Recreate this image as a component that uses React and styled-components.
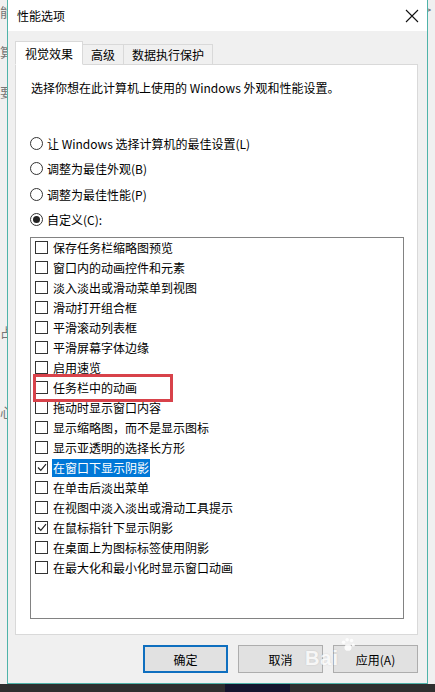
import React from "react";
import styled, { createGlobalStyle } from "styled-components";

const GlobalStyle = createGlobalStyle`
  html, body {
    margin: 0;
    padding: 0;
    background: #2e2e2e;
  }
  body {
    font-family: "Noto Sans CJK SC", "Noto Sans", sans-serif;
    font-size: 12px;
    color: #000;
  }
`;

const Screen = styled.div`
  width: 435px;
  height: 692px;
  display: flex;
  flex-direction: column;
  overflow: hidden;
`;

const Desk = styled.div`
  height: 684px;
  display: flex;
`;

const SideStrip = styled.div`
  width: ${(p) => p.w}px;
  flex-shrink: 0;
  background: #f0f0f0;
  overflow: hidden;
  display: flex;
  flex-direction: column;
  align-items: ${(p) => (p.right ? "flex-start" : "flex-end")};
  font-size: 13px;
  line-height: 40px;
`;

const Frag = styled.span`
  white-space: nowrap;
  margin-right: ${(p) => (p.right ? 0 : -6)}px;
  margin-left: ${(p) => (p.right ? -4 : 0)}px;
  margin-top: ${(p) => p.top || 0}px;
  color: #777;
`;

const Taskbar = styled.div`
  height: 8px;
  background: #2f2f2f;
  display: flex;
  padding-left: 225px;
`;

const TaskItem = styled.div`
  width: 65px;
  background: #15152e;
`;

const Window = styled.div`
  width: 419px;
  border: 1px solid #4fb3a9;
  border-top: none;
  background: #f0f0f0;
  display: flex;
  flex-direction: column;
`;

const TitleBar = styled.div`
  height: 31px;
  background: #fff;
  display: flex;
  align-items: center;
  justify-content: space-between;
  padding: 0 8px 0 9px;
`;

const Title = styled.span`
  font-size: 12px;
  line-height: 14px;
  margin-top: 1px;
`;

const Body = styled.div`
  flex: 1;
  display: flex;
  flex-direction: column;
  padding: 9px 9px 0 7px;
`;

const TabRow = styled.div`
  display: flex;
  align-items: flex-end;
  height: 24px;
  position: relative;
  z-index: 1;
`;

const Tab = styled.div`
  height: ${(p) => (p.active ? 24 : 20)}px;
  padding: 0 ${(p) => (p.active ? 9 : 8)}px;
  border: 1px solid #d9d9d9;
  border-bottom: ${(p) => (p.active ? "1px solid #fff" : "none")};
  border-left: ${(p) => (p.first ? "1px solid #d9d9d9" : "none")};
  background: ${(p) => (p.active ? "#fff" : "#f0f0f0")};
  box-sizing: border-box;
  display: flex;
  align-items: center;
  font-size: 12px;
  margin-bottom: ${(p) => (p.active ? -1 : 0)}px;
`;

const Panel = styled.div`
  height: 571px;
  box-sizing: border-box;
  background: #fff;
  border: 1px solid #d9d9d9;
  padding: 15px 13px 0 14px;
  display: flex;
  flex-direction: column;
`;

const Intro = styled.div`
  line-height: 16px;
  padding-left: 1px;
`;

const RadioGroup = styled.div`
  display: flex;
  flex-direction: column;
  gap: 9.5px;
  margin-top: 39px;
`;

const RadioRow = styled.div`
  display: flex;
  align-items: center;
  gap: 4px;
  height: 16px;
`;

const RadioDot = styled.span`
  width: 11px;
  height: 11px;
  border: 1px solid #333;
  border-radius: 50%;
  display: flex;
  align-items: center;
  justify-content: center;
  flex-shrink: 0;
  &::after {
    content: "";
    width: 7px;
    height: 7px;
    border-radius: 50%;
    background: ${(p) => (p.checked ? "#222" : "transparent")};
  }
`;

const ListBox = styled.div`
  margin-top: 9px;
  height: 382px;
  box-sizing: border-box;
  border: 1px solid #828282;
  padding: 0 0 0 4px;
  position: relative;
  overflow: hidden;
`;

const CheckRow = styled.div`
  height: 20px;
  display: flex;
  align-items: center;
  gap: 4px;
  white-space: nowrap;
`;

const Box = styled.span`
  width: 11px;
  height: 11px;
  border: 1px solid #333;
  background: #fff;
  flex-shrink: 0;
  display: flex;
  align-items: center;
  justify-content: center;
`;

const Label = styled.span`
  padding: 0 1px;
  line-height: 18px;
  background: ${(p) => (p.selected ? "#0078d7" : "transparent")};
  color: ${(p) => (p.selected ? "#fff" : "#000")};
`;

const Highlight = styled.div`
  position: absolute;
  left: 2px;
  top: 136px;
  width: 134px;
  height: 22px;
  border: 3px solid #d8424a;
`;

const ButtonRow = styled.div`
  display: flex;
  justify-content: flex-end;
  gap: 10px;
  padding: 10px 0 0 0;
  position: relative;
`;

const Button = styled.div`
  width: 85px;
  height: 28px;
  box-sizing: border-box;
  background: #e1e1e1;
  border: ${(p) => (p.primary ? "2px solid #0f6fbf" : "1px solid #adadad")};
  display: flex;
  align-items: center;
  justify-content: center;
  font-size: 12px;
`;

const Watermark = styled.div`
  position: absolute;
  right: 62px;
  top: 2px;
  color: rgba(255, 255, 255, 0.85);
  font-family: "Liberation Sans", sans-serif;
  font-weight: bold;
  font-size: 20px;
  letter-spacing: 1px;
  text-shadow: 0 0 2px rgba(0, 0, 0, 0.12);
  pointer-events: none;
  display: flex;
  align-items: flex-start;
  gap: 1px;
`;

const CheckMark = () => (
  <svg width="10" height="9" viewBox="0 0 10 9">
    <path d="M1 4.5 L3.8 7.3 L9 1.2" fill="none" stroke="#222" strokeWidth="1.2" />
  </svg>
);

const CloseIcon = () => (
  <svg width="14" height="14" viewBox="0 0 14 14">
    <path d="M1 1 L13 13 M13 1 L1 13" stroke="#111" strokeWidth="1.1" />
  </svg>
);

const Paw = () => (
  <svg width="16" height="16" viewBox="0 0 18 18">
    <g fill="rgba(255,255,255,0.85)">
      <circle cx="4" cy="6" r="2" />
      <circle cx="8" cy="3" r="2" />
      <circle cx="13" cy="4" r="2" />
      <circle cx="15" cy="9" r="1.8" />
      <ellipse cx="9" cy="12" rx="4" ry="3.5" />
    </g>
  </svg>
);

const options = [
  { text: "保存任务栏缩略图预览" },
  { text: "窗口内的动画控件和元素" },
  { text: "淡入淡出或滑动菜单到视图" },
  { text: "滑动打开组合框" },
  { text: "平滑滚动列表框" },
  { text: "平滑屏幕字体边缘" },
  { text: "启用速览" },
  { text: "任务栏中的动画" },
  { text: "拖动时显示窗口内容" },
  { text: "显示缩略图，而不是显示图标" },
  { text: "显示亚透明的选择长方形" },
  { text: "在窗口下显示阴影", checked: true, selected: true },
  { text: "在单击后淡出菜单" },
  { text: "在视图中淡入淡出或滑动工具提示" },
  { text: "在鼠标指针下显示阴影", checked: true },
  { text: "在桌面上为图标标签使用阴影" },
  { text: "在最大化和最小化时显示窗口动画" },
];

const radios = [
  { text: "让 Windows 选择计算机的最佳设置(L)" },
  { text: "调整为最佳外观(B)" },
  { text: "调整为最佳性能(P)" },
  { text: "自定义(C):", checked: true },
];

export default function App() {
  return (
    <Screen>
      <GlobalStyle />
      <Desk>
        <SideStrip w={7}>
          <Frag top={-8}>能</Frag>
          <Frag>算</Frag>
          <Frag>要</Frag>
          <Frag top={200}>占</Frag>
          <Frag top={40}>心</Frag>
        </SideStrip>
        <Window>
          <TitleBar>
            <Title>性能选项</Title>
            <CloseIcon />
          </TitleBar>
          <Body>
            <TabRow>
              <Tab active first>视觉效果</Tab>
              <Tab>高级</Tab>
              <Tab>数据执行保护</Tab>
            </TabRow>
            <Panel>
              <Intro>选择你想在此计算机上使用的 Windows 外观和性能设置。</Intro>
              <RadioGroup>
                {radios.map((r) => (
                  <RadioRow key={r.text}>
                    <RadioDot checked={r.checked} />
                    <span>{r.text}</span>
                  </RadioRow>
                ))}
              </RadioGroup>
              <ListBox>
                {options.map((o) => (
                  <CheckRow key={o.text}>
                    <Box>{o.checked && <CheckMark />}</Box>
                    <Label selected={o.selected}>{o.text}</Label>
                  </CheckRow>
                ))}
                <Highlight />
              </ListBox>
            </Panel>
            <ButtonRow>
              <Button primary>确定</Button>
              <Button>取消</Button>
              <Button>应用(A)</Button>
              <Watermark>
                <span style={{ marginTop: 10 }}>Bai</span>
                <Paw />
              </Watermark>
            </ButtonRow>
          </Body>
        </Window>
        <SideStrip w={7} right>
          <Frag right top={-10}>&gt;</Frag>
        </SideStrip>
      </Desk>
      <Taskbar>
        <TaskItem />
      </Taskbar>
    </Screen>
  );
}
